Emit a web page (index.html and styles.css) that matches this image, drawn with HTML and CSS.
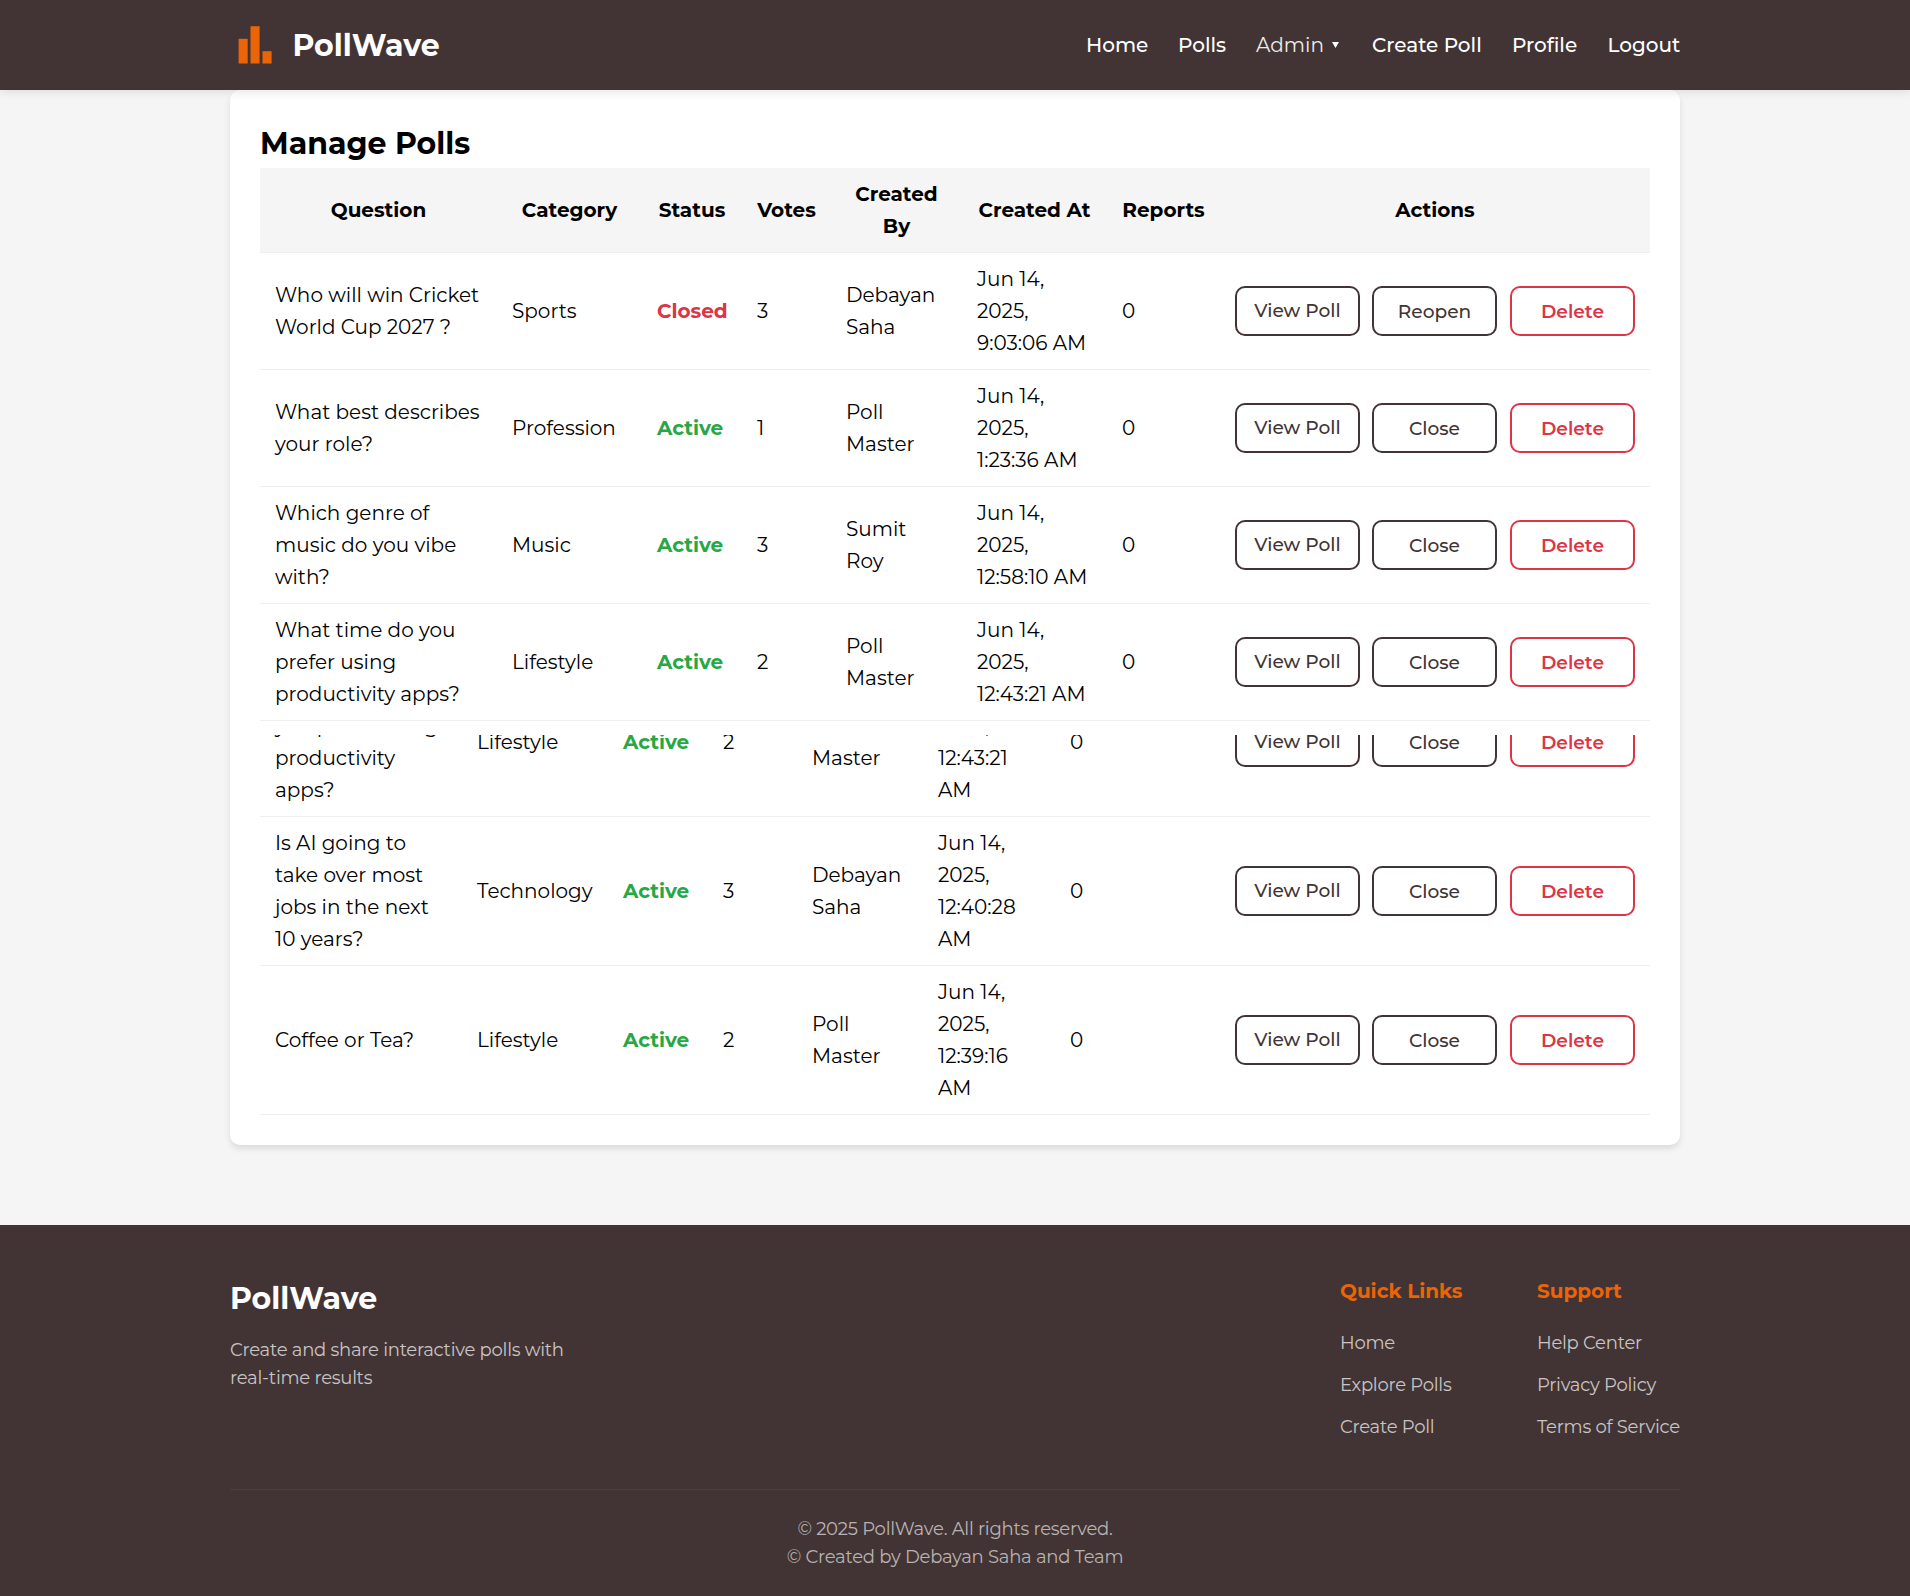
FILE: index.html
```html
<!DOCTYPE html>
<html lang="en">
<head>
<meta charset="utf-8">
<title>PollWave - Manage Polls</title>
<link rel="stylesheet" href="styles.css">
</head>
<body>
<header class="header">
  <div class="container header-inner">
    <a class="brand">
      <svg class="brand-icon" viewBox="0 0 50 50" fill="#eb6408"><rect x="8.6" y="18.8" width="9.1" height="24.7"/><rect x="20.5" y="6.2" width="9.1" height="37.3"/><rect x="32.5" y="31.2" width="9.1" height="12.3"/></svg>
      <span class="logo-text">PollWave</span>
    </a>
    <nav class="nav">
      <a class="n-home">Home</a>
      <a class="n-polls">Polls</a>
      <a class="n-admin">Admin<svg class="caret" viewBox="0 0 7 6"><path d="M0 0h7L3.5 6z" fill="#fff"/></svg></a>
      <a class="n-create">Create Poll</a>
      <a class="n-profile">Profile</a>
      <a class="n-logout">Logout</a>
    </nav>
  </div>
</header>
<main class="container card">
  <h1 class="title">Manage Polls</h1>
  <table class="polls">
    <colgroup><col class="a1"><col class="a2"><col class="a3"><col class="a4"><col class="a5"><col class="a6"><col class="a7"><col class="a8"></colgroup>
    <thead><tr><th>Question</th><th>Category</th><th>Status</th><th>Votes</th><th>Created<br>By</th><th>Created At</th><th>Reports</th><th>Actions</th></tr></thead>
    <tbody>
      <tr><td>Who will win Cricket<br>World Cup 2027 ?</td><td>Sports</td><td class="closed">Closed</td><td>3</td><td>Debayan<br>Saha</td><td>Jun 14,<br>2025,<br>9:03:06 AM</td><td>0</td><td><div class="actions"><a class="btn view">View Poll</a><button class="btn">Reopen</button><button class="btn delete">Delete</button></div></td></tr>
      <tr><td>What best describes<br>your role?</td><td>Profession</td><td class="active">Active</td><td>1</td><td>Poll<br>Master</td><td>Jun 14,<br>2025,<br>1:23:36 AM</td><td>0</td><td><div class="actions"><a class="btn view">View Poll</a><button class="btn">Close</button><button class="btn delete">Delete</button></div></td></tr>
      <tr><td>Which genre of<br>music do you vibe<br>with?</td><td>Music</td><td class="active">Active</td><td>3</td><td>Sumit<br>Roy</td><td>Jun 14,<br>2025,<br>12:58:10 AM</td><td>0</td><td><div class="actions"><a class="btn view">View Poll</a><button class="btn">Close</button><button class="btn delete">Delete</button></div></td></tr>
      <tr><td>What time do you<br>prefer using<br>productivity apps?</td><td>Lifestyle</td><td class="active">Active</td><td>2</td><td>Poll<br>Master</td><td>Jun 14,<br>2025,<br>12:43:21 AM</td><td>0</td><td><div class="actions"><a class="btn view">View Poll</a><button class="btn">Close</button><button class="btn delete">Delete</button></div></td></tr>
    </tbody>
  </table>
  <div class="scrolled">
    <table class="polls">
      <colgroup><col class="b1"><col class="b2"><col class="b3"><col class="b4"><col class="b5"><col class="b6"><col class="b7"><col class="b8"></colgroup>
      <tbody>
        <tr><td>What time do<br>you prefer using<br>productivity<br>apps?</td><td>Lifestyle</td><td class="active">Active</td><td>2</td><td>Poll<br>Master</td><td>Jun 14,<br>2025,<br>12:43:21<br>AM</td><td>0</td><td><div class="actions"><a class="btn view">View Poll</a><button class="btn">Close</button><button class="btn delete">Delete</button></div></td></tr>
        <tr><td>Is AI going to<br>take over most<br>jobs in the next<br>10 years?</td><td>Technology</td><td class="active">Active</td><td>3</td><td>Debayan<br>Saha</td><td>Jun 14,<br>2025,<br>12:40:28<br>AM</td><td>0</td><td><div class="actions"><a class="btn view">View Poll</a><button class="btn">Close</button><button class="btn delete">Delete</button></div></td></tr>
        <tr><td>Coffee or Tea?</td><td>Lifestyle</td><td class="active">Active</td><td>2</td><td>Poll<br>Master</td><td>Jun 14,<br>2025,<br>12:39:16<br>AM</td><td>0</td><td><div class="actions"><a class="btn view">View Poll</a><button class="btn">Close</button><button class="btn delete">Delete</button></div></td></tr>
      </tbody>
    </table>
  </div>
</main>
<footer class="footer">
  <div class="container">
    <div class="footer-top">
      <div class="about">
        <h2 class="logo-text">PollWave</h2>
        <p>Create and share interactive polls with<br>real-time results</p>
      </div>
      <div class="links">
        <div class="link-col quick"><h3>Quick Links</h3><a>Home</a><a>Explore Polls</a><a>Create Poll</a></div>
        <div class="link-col support"><h3>Support</h3><a>Help Center</a><a>Privacy Policy</a><a>Terms of Service</a></div>
      </div>
    </div>
    <div class="footer-bottom"><p>© 2025 PollWave. All rights reserved.</p><p>© Created by Debayan Saha and Team</p></div>
  </div>
</footer>
</body>
</html>
```
FILE: styles.css
```css
* { box-sizing: border-box; margin: 0; padding: 0; }
body {
  font-family: Montserrat, Inter, sans-serif;
  font-size: 20px;
  line-height: 32px;
  background: #f5f5f5;
  color: #000;
  height: 1596px;
  overflow: hidden;
}
.container { width: 1450px; margin: 0 auto; }

.header {
  position: relative;
  z-index: 2;
  height: 90px;
  background: #423434;
  box-shadow: 0 2px 10px rgba(0, 0, 0, 0.1);
  color: #fff;
}
.header-inner { display: flex; justify-content: space-between; align-items: center; height: 90px; }
.brand { display: flex; align-items: center; gap: 12.5px; }
.brand .logo-text { padding-top: 1px; }
.brand-icon { width: 50px; height: 50px; }
.logo-text { font-size: 30px; font-weight: 700; line-height: 40px; color: #fff; }
.nav { display: flex; gap: 30px; font-weight: 500; white-space: nowrap; }
.n-home { width: 62px; }
.n-polls { width: 48px; }
.n-admin { width: 86px; font-weight: 400; display: flex; align-items: center; color: #eeecec; }
.caret { width: 7px; height: 6px; margin-left: auto; margin-right: 3px; }
.n-create { width: 110px; }
.n-profile { width: 65.5px; }
.n-logout { width: 72.5px; }

.card {
  height: 1055px;
  padding: 30px;
  background: #fff;
  border-radius: 10px;
  box-shadow: 0 4px 6px rgba(0, 0, 0, 0.1);
}
.title { font-size: 30px; font-weight: 700; line-height: 48px; }
.polls { width: 1390px; table-layout: fixed; border-collapse: separate; border-spacing: 0; white-space: nowrap; }
th, td { padding: 10px 15px; border-bottom: 1px solid #eee; vertical-align: middle; }
th { background: #f5f5f5; font-weight: 700; text-align: center; }
td { text-align: left; }
.a1 { width: 237px; } .a2 { width: 145px; } .a3 { width: 100px; } .a4 { width: 89px; }
.a5 { width: 131px; } .a6 { width: 145px; } .a7 { width: 113px; } .a8 { width: 430px; }
.b1 { width: 202px; } .b2 { width: 146px; } .b3 { width: 100px; } .b4 { width: 89px; }
.b5 { width: 126px; } .b6 { width: 132px; } .b7 { width: 165px; } .b8 { width: 430px; }
.active { color: #28a745; font-weight: 700; }
.closed { color: #dc3545; font-weight: 700; }
.actions { display: flex; gap: 12px; }
.btn {
  width: 125px;
  height: 50px;
  padding-top: 1px;
  border: 2px solid #423434;
  border-radius: 10px;
  background: #fff;
  color: #423434;
  font: 500 18.6px/46px Montserrat, Inter, sans-serif;
  text-align: center;
}
.view { padding-top: 0; }
.delete { margin-left: 1px; border-color: #dc3545; color: #dc3545; font-weight: 600; }

/* Lower part of the list, scrolled so that its first row is partly hidden */
.scrolled { margin-top: 14px; height: 380px; overflow: hidden; }
.scrolled .polls { margin-top: -67px; }

.footer { margin-top: 80px; height: 371px; background: #423434; color: #fff; }
.footer-top { display: flex; justify-content: space-between; height: 265px; padding-top: 50px; border-bottom: 1px solid #4b3d3d; }
.about .logo-text { line-height: 48px; margin-bottom: 13px; }
.about p, .link-col a, .footer-bottom { font-size: 18px; letter-spacing: -0.25px; line-height: 28px; color: #c9c5c5; }
.links { display: flex; gap: 74px; }
.link-col { display: flex; flex-direction: column; white-space: nowrap; }
.link-col h3 { font-size: 20px; font-weight: 700; line-height: 32px; margin-bottom: 22px; color: #eb6408; }
.link-col a { margin-bottom: 14px; }
.quick { width: 123px; }
.support { width: 143px; }
.footer-bottom { padding-top: 25px; text-align: center; color: #b8b3b3; }
```
